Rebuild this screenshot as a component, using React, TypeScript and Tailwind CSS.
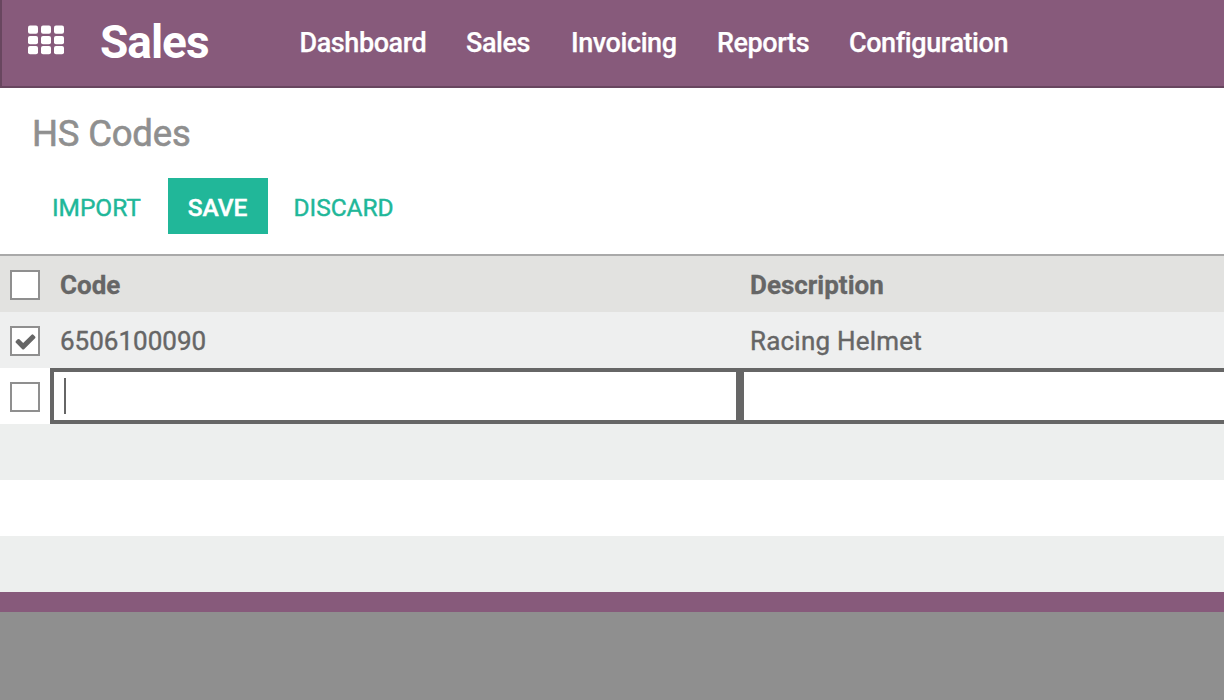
import { useState } from "react";

const menu = [
  { label: "Dashboard", cls: "w-[166.5px]" },
  { label: "Sales", cls: "w-[105px]" },
  { label: "Invoicing", cls: "w-[146px]" },
  { label: "Reports", cls: "w-[132px]" },
  { label: "Configuration", cls: "w-[180px]" },
];

function AppsIcon() {
  return (
    <svg className="mb-[6px] ml-[26px] h-[30px] w-[36px] shrink-0" viewBox="0 0 36 30" fill="currentColor">
      {[0.5, 11, 21].map((y) => [0, 13, 26].map((x) => <rect key={`${x}-${y}`} x={x} y={y} width="10" height="8.2" rx="2" />))}
    </svg>
  );
}

function Box({ on = false }: { on?: boolean }) {
  const [checked, setChecked] = useState(on);
  return (
    <button aria-label="Select row" onClick={() => setChecked(!checked)} className="mt-[2px] flex size-[30px] shrink-0 items-center justify-center border-2 border-[#8f8f8f] bg-white text-[#666]">
      {checked && (
        <svg className="size-[23px] shrink-0" viewBox="0 0 1792 1792" fill="currentColor">
          <path d="M1671 566q0 40-28 68l-724 724-136 136q-28 28-68 28t-68-28l-136-136-362-362q-28-28-28-68t28-68l136-136q28-28 68-28t68 28l294 295 656-657q28-28 68-28t68 28l136 136q28 28 28 68z" />
        </svg>
      )}
    </button>
  );
}

export default function App() {
  return (
    <div className="flex h-[700px] w-[1224px] flex-col overflow-hidden bg-white font-[Roboto,sans-serif] text-[26px] text-[#666]">
      <header className="flex h-[88px] shrink-0 items-center border-b-2 border-l-2 border-[#68465f] bg-[#875a7b] text-white">
        <AppsIcon />
        <h1 className="ml-[36px] w-[199.5px] pb-[2px] text-[46px] font-bold leading-none tracking-[-1px]">Sales</h1>
        <nav className="flex text-[27px] font-medium tracking-[-0.42px] [-webkit-text-stroke:0.25px_white]">
          {menu.map((m) => <a key={m.label} className={m.cls}>{m.label}</a>)}
        </nav>
      </header>
      <div className="flex h-[168px] shrink-0 flex-col border-b-2 border-[#a9a9a9]">
        <h2 className="ml-[32px] mt-[22px] text-[36.5px] leading-[48px] tracking-[-0.2px] text-[#8f8f8f] [-webkit-text-stroke:0.6px_#8f8f8f]">HS Codes</h2>
        <div className="mt-[20px] flex h-[56px] items-center text-[24.5px] tracking-[-0.05px] text-[#21b799] [-webkit-text-stroke:0.4px_currentColor]">
          <button className="ml-[52px] w-[116px] pt-[4px] text-left">IMPORT</button>
          <button className="h-full w-[100px] bg-[#21b799] pr-[1px] pt-[4px] font-medium tracking-[-0.1px] text-white">SAVE</button>
          <button className="ml-[25.5px] pt-[4px]">DISCARD</button>
        </div>
      </div>
      <div className="flex h-[56px] shrink-0 items-center bg-[#e2e2e0] pl-[10px] font-bold [-webkit-text-stroke:0.3px_#666]">
        <Box /><span className="ml-[20px] w-[690px] pt-[2px]">Code</span><span className="pt-[2px]">Description</span>
      </div>
      <div className="flex h-[56px] shrink-0 items-center bg-[#eeefef] pl-[10px] [-webkit-text-stroke:0.4px_#666]">
        <Box on /><span className="ml-[20px] w-[690px] pt-[2px]">6506100090</span><span className="pt-[2px] tracking-[0.2px]">Racing Helmet</span>
      </div>
      <div className="flex h-[56px] shrink-0 items-center pl-[10px]">
        <Box />
        <div className="ml-[10px] flex h-[56px] w-[690px] shrink-0 items-center border-4 border-[#666] pl-[10px]"><span className="h-[36px] w-[2px] bg-[#666]" /></div>
        <div className="h-[56px] w-[500px] shrink-0 border-4 border-[#666]" />
      </div>
      <div className="h-[56px] shrink-0 bg-[#edefee]" />
      <div className="h-[56px] shrink-0" />
      <div className="h-[56px] shrink-0 bg-[#edefee]" />
      <div className="h-[20px] shrink-0 bg-[#875a7b]" />
      <div className="grow bg-[#8f8f8f]" />
    </div>
  );
}
